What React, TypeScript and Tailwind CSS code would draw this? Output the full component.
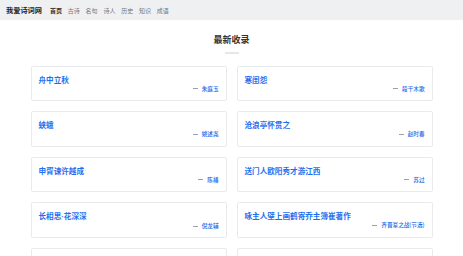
import React from 'react';

interface Poem {
  title: string;
  author: string;
}

const poems: Poem[] = [
  { title: '舟中立秋', author: '朱庭玉' },
  { title: '寒闺怨', author: '段干木歌' },
  { title: '蛱蛾', author: '姚述尧' },
  { title: '沧浪亭怀贯之', author: '赵时春' },
  { title: '申胥谏许越成', author: '陈椿' },
  { title: '送门人欧阳秀才游江西', author: '苏过' },
  { title: '长相思·花深深', author: '倪龙辅' },
  { title: '咏主人壁上画鹤寄乔主簿崔著作', author: '齐晋鞌之战(节选)' },
];

const navItems = ['首页', '古诗', '名句', '诗人', '历史', '知识', '成语'];

// the middle dot renders full-width in the CJK font, so give it a Latin one
const renderTitle = (title: string) => {
  const parts = title.split('·');
  if (parts.length === 1) return title;
  return (
    <>
      {parts[0]}
      <span style={{ fontFamily: '"Liberation Sans", sans-serif' }}>·</span>
      {parts[1]}
    </>
  );
};

const PoemCard: React.FC<{ poem?: Poem }> = ({ poem }) => (
  <div className="h-[35.5px] rounded-[2px] border-[1.5px] border-[#e8ebee] bg-white px-[7px] pt-[8px] text-left">
    {poem && (
      <>
        <p className="text-[7.6px] leading-[10px] font-bold text-[#1f6ff0]">{renderTitle(poem.title)}</p>
        <p className="flex items-center justify-end text-[5.6px] leading-[8px] font-medium text-[#1a66e8]">
          <span className="mr-[4px] inline-block h-[1px] w-[5px] bg-gray-400" />
          {poem.author}
        </p>
      </>
    )}
  </div>
);

const App: React.FC = () => {
  return (
    <div
      className="h-[256px] w-[463px] overflow-hidden bg-white"
      style={{ fontFamily: '"Noto Sans CJK SC", "Noto Sans", sans-serif' }}
    >
      <header className="flex h-[20px] items-center bg-[#eff0f2] px-[6px]">
        <h1 className="text-[7.2px] font-bold text-[#222]">我爱诗词网</h1>
        <nav className="ml-[8px] flex gap-[5.8px] text-[6px]">
          {navItems.map((item, i) => (
            <span key={item} className={i === 0 ? 'font-bold text-[#333]' : 'text-[#777]'}>
              {item}
            </span>
          ))}
        </nav>
      </header>
      <main className="pt-[14px] text-center">
        <h2 className="text-[9px] leading-[12px] font-bold text-[#333]">最新收录</h2>
        <div className="mx-auto mt-[6px] h-[1.5px] w-[14px] bg-[#e5e7eb]" />
        <div className="mx-auto mt-[12px] grid max-w-[402px] grid-cols-2 gap-x-[10px] gap-y-[10px]">
          {poems.map((p) => (
            <PoemCard key={p.title} poem={p} />
          ))}
          <PoemCard />
          <PoemCard />
        </div>
      </main>
    </div>
  );
};

export default App;
